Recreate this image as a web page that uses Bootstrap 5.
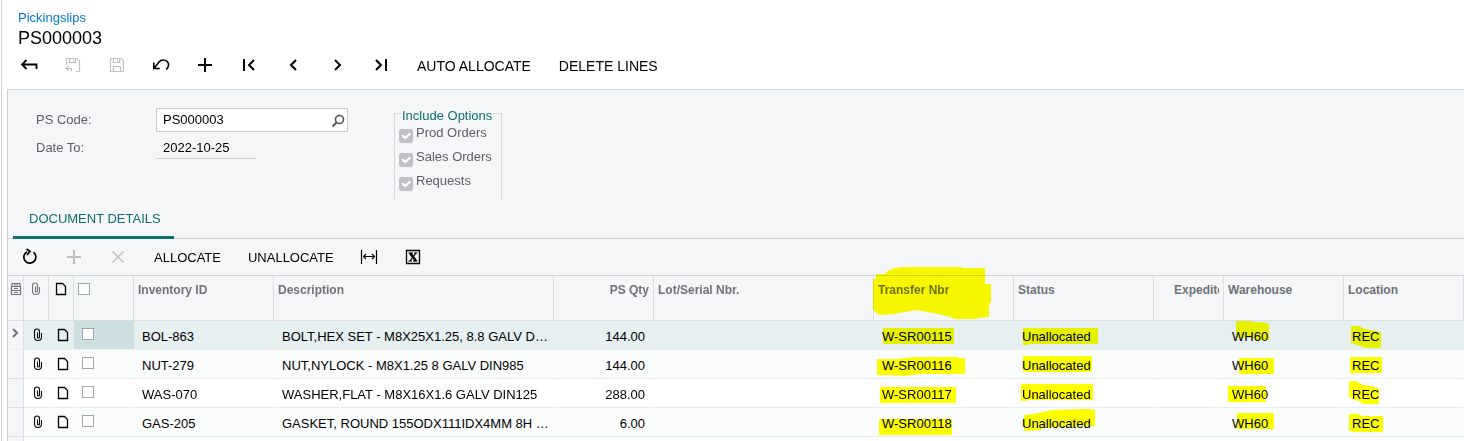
<!DOCTYPE html>
<html lang="en">
<head>
<meta charset="utf-8">
<meta name="viewport" content="width=device-width, initial-scale=1">
<title>Pickingslips - PS000003</title>
<link href="https://cdn.jsdelivr.net/npm/bootstrap@5.3.0/dist/css/bootstrap.min.css" rel="stylesheet">
<style>
:root{--line:#d0d3d6;--panel:#f5f6f8;--teal:#0e6f70;--ink:#000;--muted:#5b5f66}
body{font-family:"Liberation Sans",Arial,sans-serif;font-size:13px;line-height:16px;color:var(--ink);background:#fff}
.screen{margin-left:1px;border-left:1px solid var(--line);padding-left:5px}
.crumb{color:#027acc;text-decoration:none}
.doc-title{font-size:18px;line-height:25px;font-weight:400}
.head-area{padding:10px 11px 0}
.main-tools{padding-bottom:10px}
.tool{border:0;background:none;color:var(--ink);width:44px;height:28px;padding:0;display:flex;align-items:center;justify-content:center}
.tool svg,.ico{fill:none;stroke:currentColor;stroke-width:2}
.tool:disabled{color:#bfc1c4}
.tool-text{width:auto;padding:2px 13px 0 14px}
.main-tools .tool-text{font-size:14px;padding-right:14px}
.work{border-left:1px solid var(--line);border-top:1px solid var(--line)}
.panel-bg{background:var(--panel)}
.form-area{padding:15px 28px 0}
.fields{padding-top:3px}
.field-label{width:120px;color:var(--muted)}
.lookup{width:192px;height:24px;border:1px solid #c9ccd1;background:#fff}
.lookup input,.date-box{border:0;background:transparent;padding:0 0 0 6px;min-width:0;color:#000;outline:0}
.lookup button{border:0;background:none;padding:0;width:20px;color:#55585e}
.date-box{width:100px;height:23px;border-bottom:1px solid var(--line);padding-left:7px}
.options{width:108px;height:94px;margin:0 0 0 46px;border:1px solid #d5d8dc;border-bottom:0;padding:4px 4px 0}
.options legend{float:none;width:auto;margin:0 0 0 2px;padding:0 1px;font-size:13px;line-height:22px;height:16px;color:var(--teal);background:var(--panel)}
.opt{height:24px;padding:0;margin:0;min-height:0;display:flex;gap:3px}
.opt .form-check-input{float:none;margin:4px 0 0;width:14px;height:14px;border-radius:2px;background-color:#bfc0c8;border-color:#bfc0c8;background-size:15px 15px;opacity:1}
.opt .form-check-label{opacity:1!important;color:var(--muted)}
.tabs{border-bottom:1px solid var(--line);padding-left:5px}
.tabs button{border:0;background:none;color:var(--teal);border-bottom:3px solid var(--teal);margin-bottom:-1px;padding:12px 13px 9px 16px;line-height:16px}
.grid-tools{height:37px;border-bottom:1px solid var(--line)}
.grid{table-layout:fixed;width:100%;border-collapse:separate;border-spacing:0}
.grid th,.grid td{position:relative;white-space:nowrap;padding:0 8px}
.grid th{height:45px;vertical-align:top;padding:6px 4px 0;font-size:12px;color:#6f7279;background:var(--panel);border-right:1px solid #dcdfe3;border-bottom:1px solid #dcdfe3}
.grid td{height:29px;border-bottom:1px solid #e5efef;border-right:1px solid transparent;padding-top:4px;vertical-align:middle}
.grid td.desc{padding-right:0}
.grid .pic{padding:0;text-align:center;line-height:0}
.grid td.pic{padding-left:4px}
.grid .gutter,.gutter-fill{background:var(--panel);border-right:1px solid #dcdfe3;border-bottom-color:#dcdfe3;color:#6f7279}
.grid td.gutter{padding:0 0 4px}
.grid th.pic{padding-top:6px}
.grid th.pick{padding:7px 0 0 4px;line-height:0;text-align:left}
.grid td.pick{line-height:0;padding:0 8px 3px}
.pick input{appearance:none;width:12px;height:12px;border:1px solid #a2a5a9;background:#fff;margin:0}
.pick input.all{border-color:#93b09a}
.grid tr.tint td{background:#fbfdfd}
.grid tr.current td{background:#e6f0f1;border-bottom-color:#e6f0f1}
.grid tr.current td.pick{background:#cce0e2}
.grid tr td.gutter{background:var(--panel)!important}
.gutter-fill{width:16px}
.marker{position:absolute;top:0;left:0;width:1px;height:1px;overflow:visible;fill:#ff0;mix-blend-mode:multiply;pointer-events:none}
</style>
</head>
<body>
<svg width="0" height="0" class="position-absolute" aria-hidden="true">
  <symbol id="clip" viewBox="0 0 12 14"><path d="M2.500 4.500v4.500a3.500 3.500 0 0 0 7 0V5M2.500 5V3.500a2.500 2.500 0 0 1 5 0V9a1 1 0 0 1-2 0V4.500" stroke-width="1.100"/></symbol>
  <symbol id="page" viewBox="0 0 12 14"><path d="M1.500 1.500h6l3 3v8h-9z" stroke-width="1.300"/></symbol>
</svg>
<div class="screen d-flex flex-column min-vh-100">
  <header>
    <div class="head-area">
      <a class="crumb d-block" href="#">Pickingslips</a>
      <h1 class="doc-title m-0">PS000003</h1>
    </div>
    <div class="main-tools d-flex flex-wrap" role="toolbar" aria-label="Document">
      <button class="tool" aria-label="Back"><svg width="24" height="24"><path d="M5 11.500h14.500V16M9.500 7 5 11.500 9.500 16" stroke-width="1.800"/></svg></button>
      <button class="tool" aria-label="Save and close" disabled><svg width="24" height="24"><path d="M5.500 12V5.500H16l2.500 2.500v10.500H15M8.500 5.500v4h6v-4M12.500 6.500v2M8 13l-3 2.500L8 18M5 15.500h5.500v3" stroke-width="1.200"/></svg></button>
      <button class="tool" aria-label="Save" disabled><svg width="24" height="24"><path d="M5.500 5.500H16l2.500 2.500v10.500h-13zM8.500 5.500v4h6v-4M12.500 6.500v2M8.500 18.500v-5h7v5" stroke-width="1.200"/></svg></button>
      <button class="tool" aria-label="Undo"><svg width="24" height="24"><path d="M4.800 9.500v6h6M5 15.500l5-6.500c3.500-4 10-1.500 9.500 3.500-.200 1.500-1 3-2.300 4" stroke-width="1.600"/></svg></button>
      <button class="tool" aria-label="Add"><svg width="24" height="24"><path d="M12 5v14M5 12h14"/></svg></button>
      <button class="tool" aria-label="First"><svg width="24" height="24"><path d="M7 6v12M17 7l-5 5 5 5"/></svg></button>
      <button class="tool" aria-label="Previous"><svg width="24" height="24"><path d="m15 7-5 5 5 5"/></svg></button>
      <button class="tool" aria-label="Next"><svg width="24" height="24"><path d="m10 7 5 5-5 5"/></svg></button>
      <button class="tool" aria-label="Last"><svg width="24" height="24"><path d="m7 7 5 5-5 5M17 6v12"/></svg></button>
      <button class="tool tool-text">AUTO ALLOCATE</button>
      <button class="tool tool-text">DELETE LINES</button>
    </div>
  </header>
  <main class="work flex-grow-1 d-flex flex-column">
    <section class="panel-bg">
      <form class="form-area d-flex align-items-start">
        <div class="fields">
          <div class="d-flex align-items-center mb-1">
            <label class="field-label" for="code">PS Code:</label>
            <div class="lookup d-flex"><input id="code" class="flex-grow-1" value="PS000003"><button type="button" aria-label="Look up"><svg class="ico" width="14" height="14"><circle cx="8.500" cy="5.500" r="4" stroke-width="1.600"/><path d="M5.500 8.500 1.500 12.500"/></svg></button></div>
          </div>
          <div class="d-flex align-items-center">
            <label class="field-label" for="date">Date To:</label>
            <input id="date" class="date-box" value="2022-10-25" readonly>
          </div>
        </div>
        <fieldset class="options">
          <legend>Include Options</legend>
          <div class="opt form-check"><input class="form-check-input" type="checkbox" id="o1" checked disabled><label class="form-check-label" for="o1">Prod Orders</label></div>
          <div class="opt form-check"><input class="form-check-input" type="checkbox" id="o2" checked disabled><label class="form-check-label" for="o2">Sales Orders</label></div>
          <div class="opt form-check"><input class="form-check-input" type="checkbox" id="o3" checked disabled><label class="form-check-label" for="o3">Requests</label></div>
        </fieldset>
      </form>
      <div class="tabs d-flex" role="tablist"><button role="tab" aria-selected="true">DOCUMENT DETAILS</button></div>
      <div class="grid-tools d-flex align-items-center" role="toolbar" aria-label="Details">
        <button class="tool" aria-label="Refresh"><svg width="24" height="24"><path d="M9 6.800A6 6 0 1 0 15.500 7.300M8.500 4l3.500 2.500-3 3.500" stroke-width="1.700"/></svg></button>
        <button class="tool" aria-label="Add row" disabled><svg width="24" height="24"><path d="M12 5v14M5 12h14"/></svg></button>
        <button class="tool" aria-label="Delete row" disabled><svg width="24" height="24"><path d="m6.500 6.500 11 11m0-11-11 11" stroke-width="1.600"/></svg></button>
        <button class="tool tool-text">ALLOCATE</button>
        <button class="tool tool-text">UNALLOCATE</button>
        <button class="tool" aria-label="Fit columns"><svg width="24" height="24"><path d="M4.500 5v14M19.500 5v14M6.500 11.500h11M9 9l-2.500 2.500L9 14M15 9l2.500 2.500L15 14" stroke-width="1.200"/></svg></button>
        <button class="tool" aria-label="Export to Excel"><svg width="24" height="24"><path d="M5.500 5.500h13v13h-13z" stroke-width="1.300"/><path d="m9 8 6 8" stroke-width="2.600"/><path d="m15 8-6 8M7.500 8H12M13 8h3.500M7.500 16H11M12 16h4.500" stroke-width="1.200"/></svg></button>
      </div>
    </section>
    <table class="grid">
      <colgroup><col style="width:16px"><col style="width:25px"><col style="width:25px"><col style="width:60px"><col style="width:140px"><col style="width:280px"><col style="width:100px"><col style="width:220px"><col style="width:140px"><col style="width:140px"><col style="width:70px"><col style="width:120px"><col></colgroup>
      <thead><tr>
        <th class="pic gutter"><svg class="ico" width="12" height="14"><path d="M2 1.500h8v3H2zM1.500 4.500h9v4h-9zM1.500 8.500h9v4h-9zM4 6.500h4M4 10.500h4M4 3h4" stroke-width="1.200"/></svg></th>
        <th class="pic"><svg class="ico" width="12" height="14"><use href="#clip"/></svg></th>
        <th class="pic text-black"><svg class="ico" width="12" height="14"><use href="#page"/></svg></th>
        <th class="pick"><input type="checkbox" class="all" aria-label="Select all"></th>
        <th>Inventory ID</th><th>Description</th><th class="text-end">PS Qty</th><th>Lot/Serial Nbr.</th>
        <th>Transfer Nbr<svg class="marker"><path d="M-1 3H2V-2H12V-4L16 -6 21 -8 29 -9H88V-8H111V8H117V27H115V41L103 42V43H81L76 41 64 38 54 36 42 34 31 36 24 37 21 38 6 39 2 37 -1 33Z"/></svg></th>
        <th>Status</th><th class="ps-3"><div class="overflow-hidden ms-1">Expeditor</div></th><th>Warehouse</th><th>Location</th>
      </tr></thead>
      <tbody>
        <tr class="current">
          <td class="pic gutter"><svg class="ico" width="12" height="14"><path d="m3 3 4 4-4 4"/></svg></td>
          <td class="pic"><svg class="ico" width="12" height="14"><use href="#clip"/></svg></td><td class="pic"><svg class="ico" width="12" height="14"><use href="#page"/></svg></td>
          <td class="pick"><input type="checkbox" aria-label="Select BOL-863"></td>
          <td>BOL-863</td><td class="desc">BOLT,HEX SET - M8X25X1.25, 8.8 GALV D…</td><td class="text-end">144.00</td><td></td>
          <td>W-SR00115<svg class="marker"><path d="M9 7H80V23H9Z"/></svg></td>
          <td>Unallocated<svg class="marker"><path d="M9 7H84V23H15V24H9Z"/></svg></td><td></td>
          <td>WH60<svg class="marker"><path d="M12 0H27L29 1H39L45 3V19H31L29 17H12Z"/></svg></td>
          <td>REC<svg class="marker"><path d="M7 5H16L18 7 26 9 37 11V27H22L13 24 7 22Z"/></svg></td>
        </tr>
        <tr class="tint">
          <td class="pic gutter"></td>
          <td class="pic"><svg class="ico" width="12" height="14"><use href="#clip"/></svg></td><td class="pic"><svg class="ico" width="12" height="14"><use href="#page"/></svg></td>
          <td class="pick"><input type="checkbox" aria-label="Select NUT-279"></td>
          <td>NUT-279</td><td class="desc">NUT,NYLOCK - M8X1.25 8 GALV DIN985</td><td class="text-end">144.00</td><td></td>
          <td>W-SR00116<svg class="marker"><path d="M3 9H22L31 8 41 7H84V8H91V24H46L29 26 14 25H3Z"/></svg></td>
          <td>Unallocated<svg class="marker"><path d="M9 6H78V22H9Z"/></svg></td><td></td>
          <td>WH60<svg class="marker"><path d="M15 8H50V24H15Z"/></svg></td>
          <td>REC<svg class="marker"><path d="M6 7H38V23H6Z"/></svg></td>
        </tr>
        <tr>
          <td class="pic gutter"></td>
          <td class="pic"><svg class="ico" width="12" height="14"><use href="#clip"/></svg></td><td class="pic"><svg class="ico" width="12" height="14"><use href="#page"/></svg></td>
          <td class="pick"><input type="checkbox" aria-label="Select WAS-070"></td>
          <td>WAS-070</td><td class="desc">WASHER,FLAT - M8X16X1.6 GALV DIN125</td><td class="text-end">288.00</td><td></td>
          <td>W-SR00117<svg class="marker"><path d="M6 8H82V24H6Z"/></svg></td>
          <td>Unallocated<svg class="marker"><path d="M7 5H79V21H13V22H7Z"/></svg></td><td></td>
          <td>WH60<svg class="marker"><path d="M4 7H42V23H4Z"/></svg></td>
          <td>REC<svg class="marker"><path d="M5 2H12L19 6 26 7 35 9V25H18L17 23 9 20 5 18Z"/></svg></td>
        </tr>
        <tr class="tint">
          <td class="pic gutter"></td>
          <td class="pic"><svg class="ico" width="12" height="14"><use href="#clip"/></svg></td><td class="pic"><svg class="ico" width="12" height="14"><use href="#page"/></svg></td>
          <td class="pick"><input type="checkbox" aria-label="Select GAS-205"></td>
          <td>GAS-205</td><td class="desc">GASKET, ROUND 155ODX111IDX4MM 8H …</td><td class="text-end">6.00</td><td></td>
          <td>W-SR00118<svg class="marker"><path d="M5 11H78V27H5Z"/></svg></td>
          <td>Unallocated<svg class="marker"><path d="M10 7 20 6 29 4 38 2 74 1 81 2V18L49 19 29 20 27 22 10 23Z"/></svg></td><td></td>
          <td>WH60<svg class="marker"><path d="M13 5H50V21H13Z"/></svg></td>
          <td>REC<svg class="marker"><path d="M5 6H14L18 8H39V24H9L8 23H5Z"/></svg></td>
        </tr>
      </tbody>
    </table>
    <div class="gutter-fill flex-grow-1"></div>
  </main>
</div>
<script src="https://cdn.jsdelivr.net/npm/bootstrap@5.3.0/dist/js/bootstrap.bundle.min.js"></script>
</body>
</html>
